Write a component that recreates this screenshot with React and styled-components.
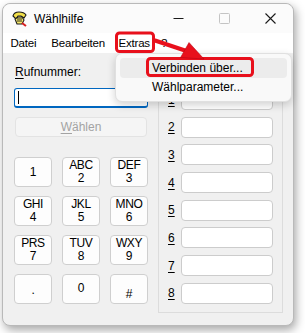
import React from 'react';
import styled, { createGlobalStyle } from 'styled-components';

const GlobalStyle = createGlobalStyle`
  html, body {
    margin: 0;
    padding: 0;
    background: #ffffff;
    overflow: hidden;
  }
  body {
    font-family: "Liberation Sans", Arial, sans-serif;
    font-size: 12px;
    color: #000;
  }
`;

const Page = styled.div`
  position: relative;
  width: 305px;
  height: 333px;
  padding: 3px 0 0 2px;
  box-sizing: border-box;
`;

const Window = styled.div`
  position: relative;
  width: 292px;
  height: 323px;
  box-sizing: border-box;
  border: 1px solid #b9b9b9;
  border-radius: 8px;
  background: #f0f0f0;
  box-shadow: 2px 4px 10px rgba(0, 0, 0, 0.35);
  display: flex;
  flex-direction: column;
`;

const TitleBar = styled.div`
  height: 29px;
  display: flex;
  align-items: center;
  background: #fbfbfb;
  border-radius: 8px 8px 0 0;
  padding-left: 8px;
`;

const AppIcon = styled.svg`
  width: 17px;
  height: 17px;
  margin-right: 6px;
`;

const Title = styled.span`
  font-family: "Segoe UI", "Liberation Sans", Arial, sans-serif;
  font-size: 12px;
  flex: 1;
`;

const CaptionButton = styled.div`
  width: 46px;
  height: 29px;
  display: flex;
  align-items: center;
  justify-content: center;
  color: ${(p) => (p.$disabled ? '#c4c4c4' : '#1a1a1a')};
`;

const MenuBar = styled.div`
  height: 20px;
  display: flex;
  align-items: center;
  background: #ffffff;
`;

const MenuItem = styled.span`
  padding: 0 ${(p) => p.$pad || 7.5}px;
  font-size: 11.5px;
  letter-spacing: -0.2px;
`;

const Client = styled.div`
  flex: 1;
  display: flex;
  padding: 0 0 0 11px;
  border-radius: 0 0 8px 8px;
`;

const LeftColumn = styled.div`
  width: 134px;
  display: flex;
  flex-direction: column;
  padding-top: 12px;
`;

const Label = styled.div`
  font-size: 12px;
  height: 15px;
  line-height: 15px;
  padding-left: 1px;
`;

const U = styled.span`
  text-decoration: underline;
  text-underline-offset: 2px;
`;

const NumberInput = styled.div`
  margin-top: 8px;
  height: 20px;
  box-sizing: border-box;
  border: 1px solid #0067c0;
  border-bottom-width: 2px;
  border-radius: 3px;
  background: #ffffff;
  display: flex;
  align-items: center;
  padding-left: 3px;
`;

const Caret = styled.div`
  width: 1px;
  height: 13px;
  background: #000;
`;

const DialButton = styled.div`
  margin: 9px 1px 0 1px;
  height: 20px;
  box-sizing: border-box;
  border: 1px solid #e3e3e3;
  border-radius: 4px;
  background: #f5f5f5;
  color: #a3a3a3;
  display: flex;
  align-items: center;
  justify-content: center;
  font-size: 12px;
`;

const Keypad = styled.div`
  margin-top: 20px;
  display: grid;
  grid-template-columns: repeat(3, 38px);
  grid-auto-rows: 30px;
  column-gap: 10px;
  row-gap: 9px;
`;

const Key = styled.div`
  box-sizing: border-box;
  border: 1px solid #cfcfcf;
  border-radius: 4px;
  background: #fdfdfd;
  display: flex;
  flex-direction: column;
  align-items: center;
  justify-content: ${(p) => p.$align || 'center'};
  padding: ${(p) => (p.$align === 'flex-end' ? '0 0 2px' : '0')};
  font-family: "Liberation Sans", Arial, sans-serif;
  font-size: 12px;
  line-height: 13px;
  letter-spacing: -0.4px;
`;

const GroupBox = styled.div`
  margin: 10px 0 12px 10px;
  width: 125px;
  box-sizing: border-box;
  border: 1px solid #dcdcdc;
  display: flex;
  flex-direction: column;
  gap: 6.7px;
  padding: 25px 9px 0 9px;
`;

const SpeedRow = styled.div`
  display: flex;
  align-items: center;
  height: 21px;
`;

const SpeedLabel = styled.span`
  width: 13px;
  font-size: 12px;
`;

const SpeedInput = styled.div`
  flex: 1;
  height: 21px;
  box-sizing: border-box;
  border: 1px solid #cccccc;
  border-radius: 4px;
  background: #ffffff;
`;

const Dropdown = styled.div`
  position: absolute;
  left: 112px;
  top: 49px;
  width: 177px;
  height: 49px;
  box-sizing: border-box;
  background: #f9f9f9;
  border: 1px solid #e0e0e0;
  border-radius: 7px;
  box-shadow: 0 3px 8px rgba(0, 0, 0, 0.18);
  padding: 4px;
  display: flex;
  flex-direction: column;
`;

const DropItem = styled.div`
  height: 21px;
  display: flex;
  align-items: center;
  padding-left: 32px;
  border-radius: 4px;
  background: ${(p) => (p.$hover ? '#ececec' : 'transparent')};
  font-size: 12px;
`;

const Annotation = styled.svg`
  position: absolute;
  left: 0;
  top: 0;
  width: 305px;
  height: 333px;
  pointer-events: none;
`;

const keys = [
  ['', '1'],
  ['ABC', '2'],
  ['DEF', '3'],
  ['GHI', '4'],
  ['JKL', '5'],
  ['MNO', '6'],
  ['PRS', '7'],
  ['TUV', '8'],
  ['WXY', '9'],
];

export default function App() {
  return (
    <Page>
      <GlobalStyle />
      <Window>
        <TitleBar>
          <AppIcon viewBox="0 0 17 17">
            <path d="M2 6 Q3 2 8 2 Q13 2 15 5 L13 8 L10 6 L7 6 L5 9 Z" fill="#f2e04a" stroke="#1b1b1b" strokeWidth="1.1" />
            <path d="M4 9 L7 7 L11 7 L13 10 L11 14 L6 14 Z" fill="#f5e76a" stroke="#1b1b1b" strokeWidth="1.1" />
            <path d="M6 9 h5 M6 11 h5" stroke="#1b1b1b" strokeWidth="0.9" />
            <path d="M11 13 L15 16" stroke="#d61f1f" strokeWidth="2" />
          </AppIcon>
          <Title>Wählhilfe</Title>
          <CaptionButton>
            <svg width="11" height="11" viewBox="0 0 11 11">
              <path d="M0.5 5.5 H10.5" stroke="currentColor" strokeWidth="1" />
            </svg>
          </CaptionButton>
          <CaptionButton $disabled>
            <svg width="11" height="11" viewBox="0 0 11 11">
              <rect x="0.5" y="0.5" width="10" height="10" rx="1" fill="none" stroke="currentColor" strokeWidth="1" />
            </svg>
          </CaptionButton>
          <CaptionButton>
            <svg width="11" height="11" viewBox="0 0 11 11">
              <path d="M0.5 0.5 L10.5 10.5 M10.5 0.5 L0.5 10.5" stroke="currentColor" strokeWidth="1.1" />
            </svg>
          </CaptionButton>
        </TitleBar>
        <MenuBar>
          <MenuItem>Datei</MenuItem>
          <MenuItem>Bearbeiten</MenuItem>
          <MenuItem $pad={6}>Extras</MenuItem>
          <MenuItem $pad={5}>?</MenuItem>
        </MenuBar>
        <Client>
          <LeftColumn>
            <Label>
              <U>R</U>ufnummer:
            </Label>
            <NumberInput>
              <Caret />
            </NumberInput>
            <DialButton>
              <U>W</U>ählen
            </DialButton>
            <Keypad>
              {keys.map(([letters, num]) => (
                <Key key={num}>
                  {letters && <span>{letters}</span>}
                  <span>{num}</span>
                </Key>
              ))}
              <Key>
                <span style={{ marginTop: 2 }}>.</span>
              </Key>
              <Key $align="flex-start">
                <span style={{ marginTop: 7 }}>0</span>
              </Key>
              <Key $align="flex-end">
                <span>#</span>
              </Key>
            </Keypad>
          </LeftColumn>
          <GroupBox>
            {[1, 2, 3, 4, 5, 6, 7, 8].map((n) => (
              <SpeedRow key={n}>
                <SpeedLabel>
                  <U>{n}</U>
                </SpeedLabel>
                <SpeedInput />
              </SpeedRow>
            ))}
          </GroupBox>
        </Client>
        <Dropdown>
          <DropItem $hover>Verbinden über...</DropItem>
          <DropItem>Wählparameter...</DropItem>
        </Dropdown>
      </Window>
      <Annotation viewBox="0 0 305 333">
        <rect x="116.5" y="33" width="37" height="18.5" rx="3" fill="none" stroke="#e8101c" strokeWidth="3" />
        <rect x="147.5" y="58.5" width="105" height="17" rx="3" fill="none" stroke="#e8101c" strokeWidth="3" />
        <path d="M155 40.5 L185 50.5" stroke="#e8101c" strokeWidth="4" strokeLinecap="round" />
        <polygon points="204,59 180.5,57.5 189,42.5" fill="#e8101c" stroke="#b00010" strokeWidth="0.5" />
      </Annotation>
    </Page>
  );
}
